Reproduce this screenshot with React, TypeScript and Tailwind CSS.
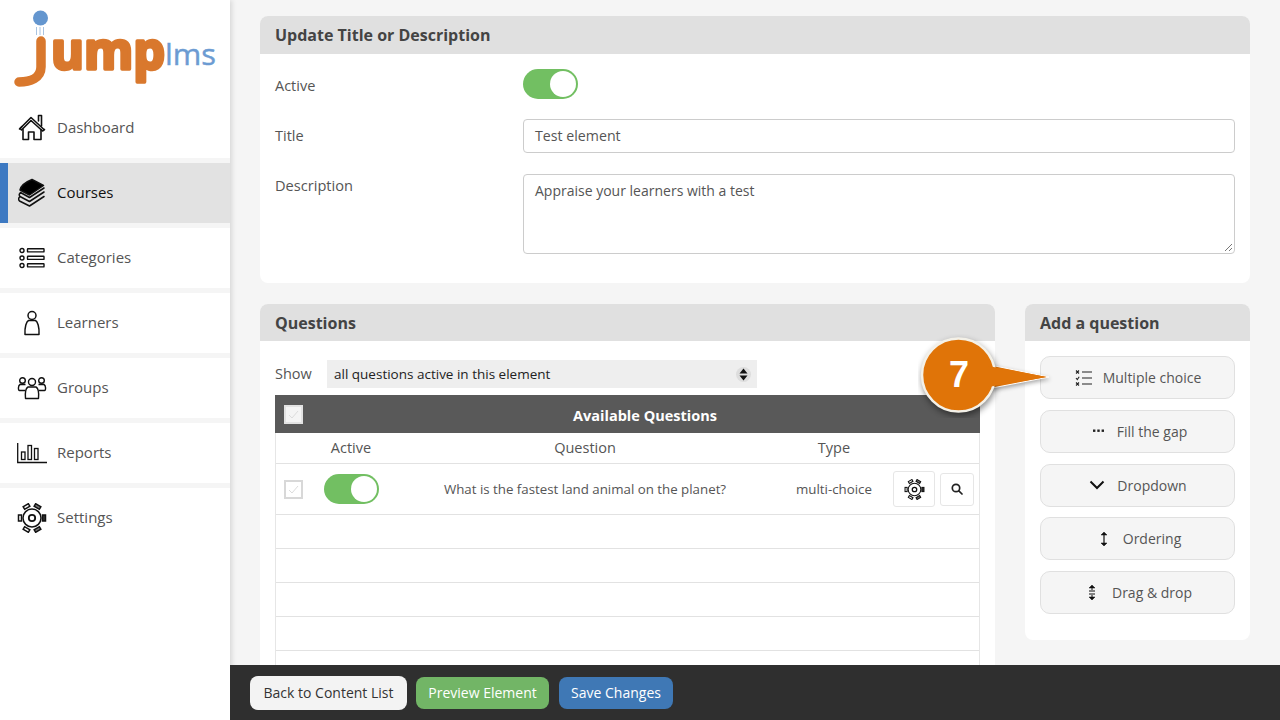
import React from "react";

const Home = () => (
  <svg width="28" height="28" viewBox="0 0 28 28" fill="none" stroke="#111" strokeWidth="1.6" strokeLinejoin="round" strokeLinecap="round">
    <path d="M1.500 15 L13 3.500 L26 15.500" />
    <path d="M4 12.500 L2 14.500 L3.500 16 L13 6.500 L24.500 17 L26.500 15.500" />
    <path d="M5 15.500 V25.500 H10.500 V18 H16 V25.500 H23 V15.500" />
    <path d="M20.500 7 V1.500 H23.500 V12" />
  </svg>
);
const Books = () => (
  <svg width="28" height="30" viewBox="0 0 28 30" fill="none" stroke="#111" strokeWidth="1.5" strokeLinejoin="round" strokeLinecap="round">
    <path d="M14 1.500 L25.500 7.500 L11.500 17 L2 12 C3 7.500 9 3.500 14 1.500 Z" fill="#000" />
    <path d="M26 10 L11.500 19.500 L2.500 14.500 C1 16 1 17.500 2 18.500 L11.500 23.500 L26 14" />
    <path d="M2 18.500 C0.500 20 0.500 22 1.500 23 L11.500 28 L26 18.500" />
  </svg>
);
const Categories = () => (
  <svg width="26" height="22" viewBox="0 0 26 22" fill="none" stroke="#111" strokeWidth="1.4">
    <circle cx="3" cy="3.500" r="2" />
    <circle cx="3" cy="11" r="2" />
    <circle cx="3" cy="18.500" r="2" />
    <rect x="8.500" y="1.700" width="16.500" height="3.200" rx="0.500" />
    <rect x="8.500" y="9.200" width="16.500" height="3.200" rx="0.500" />
    <rect x="8.500" y="16.700" width="16.500" height="3.200" rx="0.500" />
  </svg>
);
const Learner = () => (
  <svg width="18" height="26" viewBox="0 0 18 26" fill="none" stroke="#111" strokeWidth="1.5">
    <circle cx="9" cy="5.500" r="4" />
    <path d="M5.500 10.500 H12.500 C14.500 11.500 16.500 17 16 24.500 H2 C1.500 17 3.500 11.500 5.500 10.500 Z" strokeLinejoin="round" />
  </svg>
);
const Groups = () => (
  <svg width="30" height="24" viewBox="0 0 30 24" fill="none" stroke="#111" strokeWidth="1.4" strokeLinejoin="round">
    <circle cx="5.500" cy="4.500" r="2.800" />
    <circle cx="15" cy="6" r="3.500" />
    <circle cx="24.500" cy="4.500" r="2.800" />
    <path d="M8 14.500 H2.500 C1 14.500 1 9.500 3 8.500 H8.500" />
    <path d="M22 14.500 H27.500 C29 14.500 29 9.500 27 8.500 H21.500" />
    <path d="M11 11 H19 C21 12 22 17 21.500 22.500 H8.500 C8 17 9 12 11 11 Z" />
  </svg>
);
const Reports = () => (
  <svg width="30" height="22" viewBox="0 0 30 22" fill="none" stroke="#111" strokeWidth="1.3">
    <path d="M0.700 1 V20.500 H30" />
    <rect x="4.500" y="10" width="3.500" height="7.500" />
    <rect x="11" y="3.500" width="3.500" height="14" />
    <rect x="17.500" y="6.500" width="3.500" height="11" />
  </svg>
);
const Gear = ({ size = 30 }: { size?: number }) => (
  <svg width={size} height={size} viewBox="0 0 30 30" fill="none" stroke="#111" strokeWidth="1.500">
    <circle cx="15" cy="15" r="9" />
    <circle cx="15" cy="15" r="3.200" strokeWidth="1.800" />
    <rect x="1.500" y="12" width="3" height="6" />
    <rect x="25.500" y="12" width="3" height="6" fill="#333" />
    <rect x="6.500" y="2" width="6" height="3" transform="rotate(-30 9.500 3.500)" />
    <rect x="17.500" y="2" width="6" height="3" transform="rotate(30 20.500 3.500)" fill="#777" />
    <rect x="6.500" y="25" width="6" height="3" transform="rotate(30 9.500 26.500)" />
    <rect x="17.500" y="25" width="6" height="3" transform="rotate(-30 20.500 26.500)" fill="#777" />
  </svg>
);

const Toggle = () => (
  <div className="w-[55px] h-[30px] rounded-full bg-[#72bf62] flex items-center justify-end px-[2px] shrink-0">
    <div className="w-[26px] h-[26px] rounded-full bg-white" />
  </div>
);
const Check = ({ light }: { light?: boolean }) => (
  <div className={`w-[19px] h-[19px] border-2 flex items-center justify-center ${light ? "border-[#e2e2e2] bg-[#f4f4f4]" : "border-[#d8d8d8] bg-white"}`}>
    <svg width="11" height="9" viewBox="0 0 11 9" fill="none" stroke="#dcdcdc" strokeWidth="1">
      <path d="M1 5 L4 8 L10 1" />
    </svg>
  </div>
);

const nav = [
  { label: "Dashboard", icon: <Home /> },
  { label: "Courses", icon: <Books />, active: true },
  { label: "Categories", icon: <Categories /> },
  { label: "Learners", icon: <Learner /> },
  { label: "Groups", icon: <Groups /> },
  { label: "Reports", icon: <Reports /> },
  { label: "Settings", icon: <Gear /> },
];

const ChoiceIcon = () => (
  <svg width="18" height="18" viewBox="0 0 18 18" fill="none" stroke="#222" strokeWidth="1.100">
    <path d="M1 1.500 L4 4.500 M4 1.500 L1 4.500 M1 9 L2.300 10.500 L4.200 7.800 M1 13.500 L4 16.500 M4 13.500 L1 16.500" />
    <path d="M7 3 H17 M7 9 H17 M7 15 H17" />
  </svg>
);
const DotsIcon = () => (
  <svg width="13" height="4" viewBox="0 0 12 4" fill="#222">
    <rect x="0.500" y="0.500" width="2.400" height="2.400" />
    <rect x="4.800" y="0.500" width="2.400" height="2.400" />
    <rect x="9.100" y="0.500" width="2.400" height="2.400" />
  </svg>
);
const ChevronIcon = () => (
  <svg width="16" height="10" viewBox="0 0 16 10" fill="none" stroke="#111" strokeWidth="2">
    <path d="M1.500 1.500 L8 8 L14.500 1.500" />
  </svg>
);
const OrderIcon = () => (
  <svg width="8" height="16" viewBox="0 0 8 16" fill="#111" stroke="#111" strokeWidth="1.200">
    <path d="M4 2 V14" />
    <path d="M1 4 L4 1 L7 4 Z M1 12 L4 15 L7 12 Z" strokeWidth="0.500" />
  </svg>
);
const DragIcon = () => (
  <svg width="8" height="17" viewBox="0 0 8 17" fill="#111" stroke="#111" strokeWidth="1">
    <path d="M1 4 L4 1 L7 4 Z M1 13 L4 16 L7 13 Z" strokeWidth="0.500" />
    <path d="M1 7 H7 M1 10 H7 M4 3 V6 M4 11 V14" />
  </svg>
);

const addButtons = [
  { label: "Multiple choice", icon: <ChoiceIcon />, cls: "gap-[10px] pl-[1px]" },
  { label: "Fill the gap", icon: <DotsIcon />, cls: "gap-[12px] pl-[4px]" },
  { label: "Dropdown", icon: <ChevronIcon />, cls: "gap-[12px] pl-[1px]" },
  { label: "Ordering", icon: <OrderIcon />, cls: "gap-[15px] pl-[6px]" },
  { label: "Drag & drop", icon: <DragIcon />, cls: "gap-[16px] pl-[5px]" },
];

export default function App() {
  return (
    <div className="w-[1280px] h-[720px] overflow-hidden flex bg-[#f5f5f5] text-[#555] font-['Open_Sans',sans-serif] relative">
      <aside className="w-[230px] shrink-0 bg-[#f5f5f5] shadow-[2px_0_5px_rgba(0,0,0,0.12)] z-10 flex flex-col">
        <div className="h-[98px] bg-white shrink-0">
          <svg width="220" height="98" viewBox="0 0 220 98">
            <circle cx="40.500" cy="18" r="7.500" fill="#6496cf" />
            <path d="M36.500 27 V35 M40 27 V35 M43.500 27 V35" stroke="#a9c4e2" strokeWidth="1" />
            <path d="M41 41 V67 C41 78 30 82 19 82" fill="none" stroke="#d9782d" strokeWidth="9.500" strokeLinecap="round" />
            <text x="51" y="69" fontFamily="'Open Sans',sans-serif" fontWeight="700" fontSize="52" fill="#d9782d" stroke="#d9782d" strokeWidth="3.500" strokeLinejoin="round" textLength="114" lengthAdjust="spacingAndGlyphs">ump</text>
            <text x="165" y="65" fontFamily="'Open Sans',sans-serif" fontSize="29" fill="#6c9bd2" stroke="#6c9bd2" strokeWidth="0.400" textLength="51" lengthAdjust="spacingAndGlyphs">lms</text>
          </svg>
        </div>
        {nav.map((n, i) => (
          <div
            key={n.label}
            className={`h-[60px] shrink-0 flex items-center ${i === nav.length - 1 ? "" : "mb-[5px]"} ${n.active ? "bg-[#e2e2e2] border-l-8 border-[#3d79c2] text-[#111]" : "bg-white text-[#555]"}`}
          >
            <div className={`${n.active ? "w-[49px] pl-[2px]" : "w-[57px] pl-[10px]"} flex justify-center shrink-0`}>
              <div className="-ml-[3px]">{n.icon}</div>
            </div>
            <span className="text-[15px] mb-[2px]">{n.label}</span>
          </div>
        ))}
        <div className="flex-1 bg-white" />
      </aside>

      <main className="flex-1 flex flex-col min-w-0">
        <div className="flex-1 overflow-hidden px-[30px] pt-4 min-h-0">
          <section className="bg-white rounded-[8px] h-[267px]">
            <h2 className="h-[38px] bg-[#e0e0e0] rounded-t-[8px] px-[15px] flex items-center text-[16px] font-bold text-[#444]">Update Title or Description</h2>
            <div className="px-[15px] pt-[15px]">
              <div className="flex items-center h-[30px]">
                <span className="w-[248px] text-[14.500px] pt-[3px]">Active</span>
                <Toggle />
              </div>
              <div className="flex items-center mt-5 h-[34px]">
                <span className="w-[248px] text-[14.500px]">Title</span>
                <div className="w-[712px] h-[34px] border border-[#ccc] rounded-[4px] pl-[11px] flex items-center text-[14.200px]">Test element</div>
              </div>
              <div className="flex mt-[21px]">
                <span className="w-[248px] text-[14.600px] pt-[1px]">Description</span>
                <div className="w-[712px] h-[80px] border border-[#ccc] rounded-[4px] pl-[11px] py-[5px] text-[14px] relative">
                  Appraise your learners with a test
                  <svg className="absolute right-[1px] bottom-[1px]" width="9" height="9" viewBox="0 0 9 9" stroke="#777" strokeWidth="1">
                    <path d="M8 1 L1 8 M8 5 L5 8" />
                  </svg>
                </div>
              </div>
            </div>
          </section>

          <div className="flex gap-[30px] mt-[21px] items-start">
            <section className="w-[735px] bg-white rounded-t-[8px] h-[400px] shrink-0">
              <h2 className="h-[37px] bg-[#e0e0e0] rounded-t-[8px] px-[15px] flex items-center text-[16px] font-bold text-[#444]">Questions</h2>
              <div className="px-[15px] pt-[19px]">
                <div className="flex items-center h-[28px]">
                  <span className="w-[52px] text-[14.500px]">Show</span>
                  <div className="w-[430px] h-[28px] bg-[#eee] pl-[7px] pr-[6px] flex items-center justify-between text-[13.500px] text-[#222]">
                    all questions active in this element
                    <div className="w-[15px] h-[15px] rounded-full bg-[#ddd] flex items-center justify-center">
                      <svg width="9" height="13" viewBox="0 0 9 13" fill="#111">
                        <path d="M4.500 0.500 L8.500 5.500 H0.500 Z M4.500 12.500 L8.500 7.500 H0.500 Z" />
                      </svg>
                    </div>
                  </div>
                </div>
                <div className="mt-[7px] border-x border-[#e6e6e6]">
                  <div className="h-[38px] bg-[#595959] -mx-[1px] relative flex items-center justify-center pl-[35px] pt-[3px] text-white font-bold text-[14.500px]">
                    <div className="absolute left-[9px] top-[10px]"><Check light /></div>
                    Available Questions
                  </div>
                  <div className="h-[31px] flex items-center text-[14.500px] border-b border-[#e2e2e2]">
                    <div className="w-[36px]" />
                    <div className="w-[78px] text-center">Active</div>
                    <div className="w-[390px] text-center">Question</div>
                    <div className="w-[108px] text-center">Type</div>
                  </div>
                  <div className="h-[51px] flex items-center text-[13.300px] border-b border-[#e2e2e2]">
                    <div className="w-[36px] pl-[8px]"><Check /></div>
                    <div className="w-[78px] flex justify-center"><Toggle /></div>
                    <div className="w-[390px] text-center pt-[2px]">What is the fastest land animal on the planet?</div>
                    <div className="w-[108px] text-center pt-[2px]">multi-choice</div>
                    <div className="w-[42px] h-[36px] border border-[#e6e6e6] rounded-[3px] flex items-center justify-center ml-[5px]"><Gear size={21} /></div>
                    <div className="w-[34px] h-[33px] border border-[#e6e6e6] rounded-[3px] flex items-center justify-center ml-[5px]">
                      <svg width="12" height="12" viewBox="0 0 12 12" fill="none" stroke="#222" strokeWidth="1.700">
                        <circle cx="5" cy="5" r="3.700" />
                        <path d="M7.800 7.800 L11 11" strokeLinecap="round" />
                      </svg>
                    </div>
                  </div>
                  {[0, 1, 2, 3, 4].map((i) => (
                    <div key={i} className="h-[34px] border-b border-[#e2e2e2]" />
                  ))}
                </div>
              </div>
            </section>

            <section className="w-[225px] h-[336px] bg-white rounded-[8px] shrink-0">
              <h2 className="h-[37px] bg-[#e0e0e0] rounded-t-[8px] px-[15px] flex items-center text-[16px] font-bold text-[#444]">Add a question</h2>
              <div className="px-[15px] pt-[15px] flex flex-col gap-[10.750px]">
                {addButtons.map((b) => (
                  <div key={b.label} className={`h-[43px] bg-[#f5f5f5] border border-[#e0e0e0] rounded-[10px] flex items-center justify-center text-[14px] ${b.cls}`}>
                    {b.icon}
                    <span>{b.label}</span>
                  </div>
                ))}
              </div>
            </section>
          </div>
        </div>

        <footer className="h-[55px] shrink-0 bg-[#2f2f2f] z-10 pl-5 flex items-center gap-[9px] text-[14px]">
          <div className="h-[34px] w-[157px] bg-[#f3f3f3] rounded-[8px] text-[#333] flex items-center justify-center">Back to Content List</div>
          <div className="h-[32px] w-[133px] bg-[#72b566] rounded-[8px] text-white flex items-center justify-center">Preview Element</div>
          <div className="h-[32px] w-[114px] ml-[1px] bg-[#3f78b5] rounded-[8px] text-white flex items-center justify-center">Save Changes</div>
        </footer>
      </main>

      <div className="absolute left-[918px] top-[334px] w-[136px] h-[84px] z-20">
        <svg width="136" height="84" viewBox="0 0 136 84" className="absolute inset-0">
          <path d="M72 31 L131 43 L74 54 Z" fill="#e07408" stroke="#fff" strokeWidth="1" style={{ filter: "drop-shadow(0px 2px 2px rgba(0,0,0,0.35))" }} />
          <circle cx="40.500" cy="41" r="36.500" fill="#e07408" stroke="#f4f1e8" strokeWidth="2.500" style={{ filter: "drop-shadow(1px 3px 3px rgba(0,0,0,0.45))" }} />
          <path d="M70 32 L129 43 L70 53 Z" fill="#e07408" />
        </svg>
        <span className="absolute left-[28px] top-[18px] w-[26px] text-center text-white font-bold text-[36px] leading-[46px] font-['Liberation_Sans',sans-serif]">7</span>
      </div>
    </div>
  );
}
